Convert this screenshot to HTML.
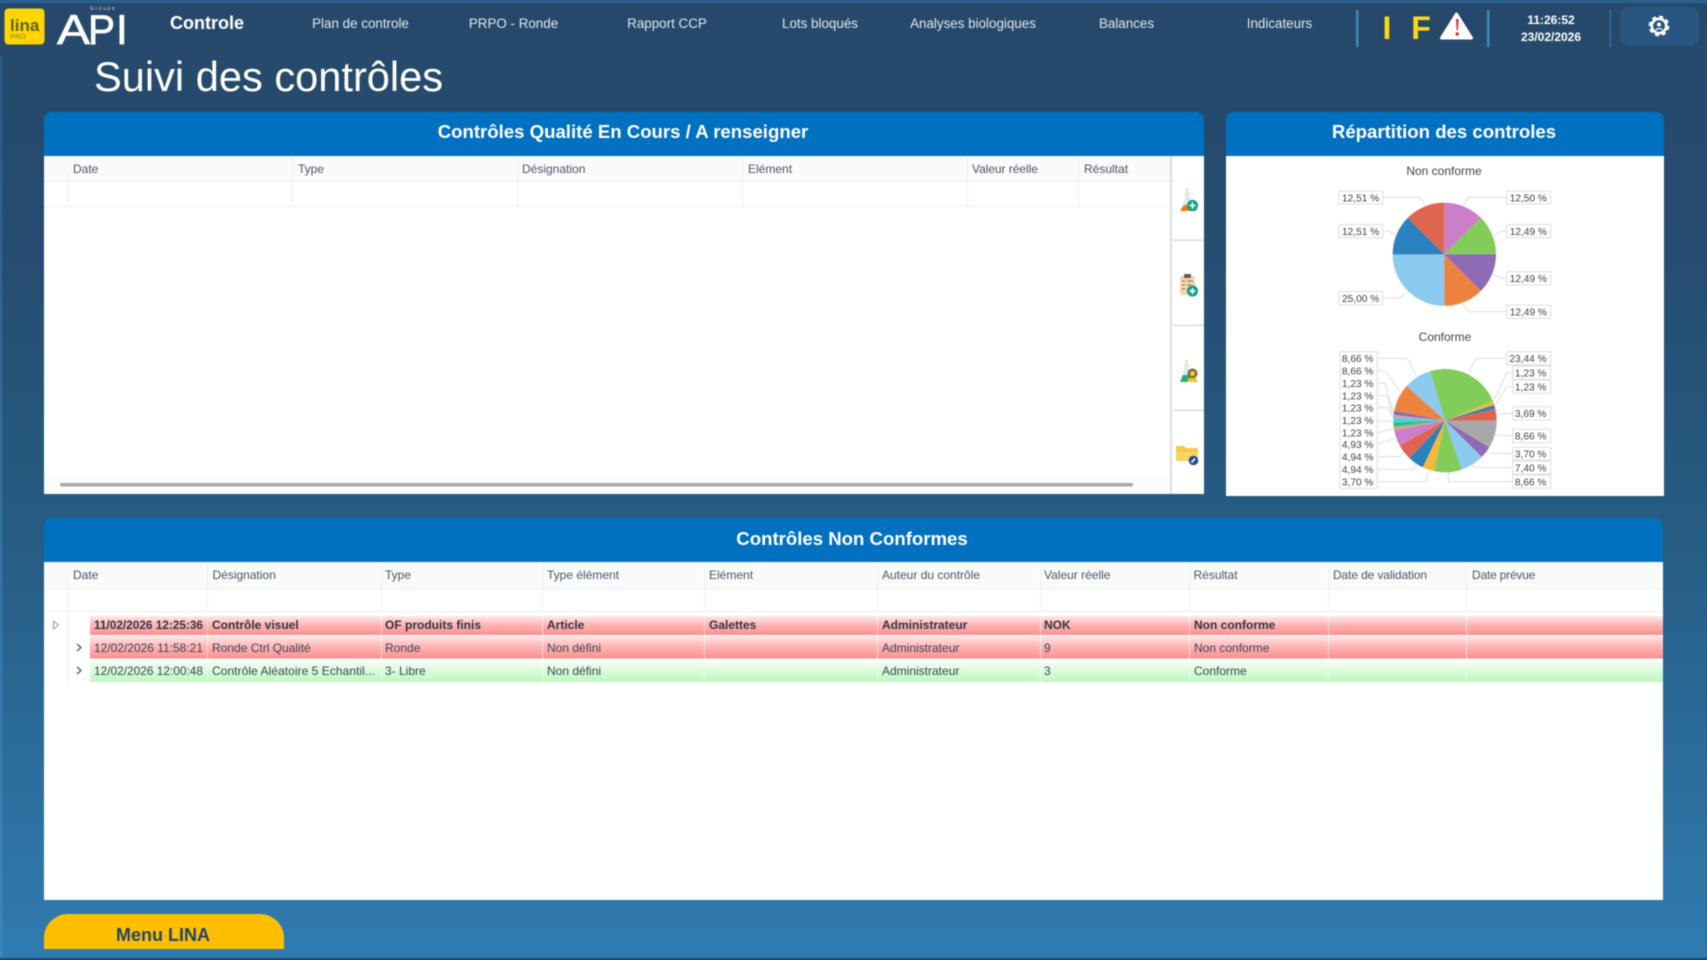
<!DOCTYPE html>
<html lang="fr">
<head>
<meta charset="utf-8">
<title>Suivi des contrôles</title>
<style>
html,body{margin:0;padding:0;width:1707px;height:960px;overflow:hidden;background:#26496b}
svg{display:block;filter:blur(.4px)}
text{font-family:"Liberation Sans",sans-serif}
.nav{font-size:13.4px;fill:#dfe7ee;text-anchor:middle}
.ttl{font-size:18.6px;font-weight:bold;fill:#fff;text-anchor:middle}
.th{font-size:12px;fill:#48566a}
.td{font-size:12px;fill:#3a4658}
.b{font-weight:bold;fill:#2c3646}
.lb{font-size:30.5px;fill:#444;text-anchor:middle}
.bx{fill:#fff;stroke:#ddd;stroke-width:3}
.cn{fill:none;stroke:#ddd;stroke-width:3}
.g{stroke:#eee;stroke-width:1}
.w{stroke:#fff;stroke-opacity:.55;stroke-width:1}
</style>
</head>
<body>
<svg width="1707" height="960" viewBox="0 0 1707 960" xmlns="http://www.w3.org/2000/svg">
<defs>
<linearGradient id="bg" x1="0" y1="0" x2="0" y2="1">
<stop offset="0" stop-color="#26496b"/><stop offset=".25" stop-color="#264c70"/><stop offset=".55" stop-color="#275c83"/><stop offset="1" stop-color="#307cb1"/>
</linearGradient>
<linearGradient id="edge" x1="0" y1="0" x2="0" y2="1">
<stop offset="0" stop-color="#2c5f88"/><stop offset="1" stop-color="#4090cc"/>
</linearGradient>
<linearGradient id="red" x1="0" y1="0" x2="0" y2="1">
<stop offset="0" stop-color="#ffe8e8"/><stop offset=".45" stop-color="#ffb6b6"/><stop offset="1" stop-color="#fb8f8f"/>
</linearGradient>
<linearGradient id="grn" x1="0" y1="0" x2="0" y2="1">
<stop offset="0" stop-color="#fbfffb"/><stop offset="1" stop-color="#bdf8bd"/>
</linearGradient>
</defs>

<!-- background -->
<rect width="1707" height="960" fill="url(#bg)"/>
<rect width="1707" height="3" fill="#2c6192"/>
<rect x="0" y="56" width="2" height="904" fill="url(#edge)"/>
<rect x="0" y="958" width="1707" height="2" fill="#1d4a6d"/>

<!-- logo lina -->
<rect x="4.5" y="8.5" width="40" height="36" rx="4" fill="#ffd400"/>
<text x="10" y="31" font-size="17" font-weight="bold" fill="#5b6622">lina</text>
<text x="10" y="39" font-size="7.5" font-weight="bold" fill="#a0a81e">PRO</text>

<!-- logo API -->
<text x="90" y="10" font-size="5" fill="#cfd8e0" letter-spacing="1.6">Groupe</text>
<g fill="#fff" stroke="#fff" stroke-width=".7" font-size="42">
<text x="57" y="44" textLength="33" lengthAdjust="spacingAndGlyphs">A</text>
<text x="88" y="44" textLength="27" lengthAdjust="spacingAndGlyphs">P</text>
<text x="116" y="44">I</text>
</g>

<!-- nav -->
<text x="207" y="29" font-size="18" font-weight="bold" fill="#fff" text-anchor="middle">Controle</text>
<text class="nav" x="360.5" y="28">Plan de controle</text>
<text class="nav" x="513.5" y="28">PRPO - Ronde</text>
<text class="nav" x="667" y="28">Rapport CCP</text>
<text class="nav" x="820" y="28">Lots bloqués</text>
<text class="nav" x="973" y="28">Analyses biologiques</text>
<text class="nav" x="1126.5" y="28">Balances</text>
<text class="nav" x="1279.5" y="28">Indicateurs</text>

<rect x="1356" y="10" width="2.5" height="37" fill="#3f86b8"/>
<rect x="1487" y="10" width="2.5" height="37" fill="#3f86b8"/>
<rect x="1609.5" y="10" width="1.5" height="37" fill="#346f9c"/>

<text x="1387" y="39" font-size="32" font-weight="bold" fill="#ffd814" text-anchor="middle">I</text>
<text x="1421" y="39" font-size="32" font-weight="bold" fill="#ffd814" text-anchor="middle">F</text>
<path d="M1456.5 14 L1471.5 38 H1441.5 Z" fill="#fff" stroke="#fff" stroke-width="3" stroke-linejoin="round"/>
<path d="M1456 19 h2.6 l-.6 11 h-1.4 Z" fill="#d92b3a"/>
<circle cx="1457.2" cy="34" r="1.7" fill="#d92b3a"/>

<text x="1551" y="24" font-size="12" font-weight="bold" fill="#fff" text-anchor="middle">11:26:52</text>
<text x="1551" y="41" font-size="12" font-weight="bold" fill="#fff" text-anchor="middle">23/02/2026</text>

<rect x="1620" y="7" width="79" height="39" rx="9" fill="#295581"/>
<circle cx="1659" cy="26" r="9.2" fill="none" stroke="#fff" stroke-width="2.3" stroke-dasharray="4 3.2"/>
<circle cx="1659" cy="26" r="7.2" fill="none" stroke="#fff" stroke-width="2.6"/>
<circle cx="1659" cy="24.5" r="2" fill="#fff"/>
<path d="M1655.5 30 q3.5 -3 7 0" fill="none" stroke="#fff" stroke-width="1.3"/>

<!-- title -->
<text x="94" y="91" font-size="41.6" fill="#fff">Suivi des contrôles</text>

<!-- top-left panel -->
<path d="M44 156 V120 a8 8 0 0 1 8 -8 H1196 a8 8 0 0 1 8 8 V156 Z" fill="#0070c0"/>
<text class="ttl" x="623" y="138">Contrôles Qualité En Cours / A renseigner</text>
<rect x="44" y="156" width="1160" height="338" fill="#fff"/>
<rect x="44" y="156" width="1127" height="26" fill="#fafafa"/>
<line class="g" x1="44" y1="181.5" x2="1170" y2="181.5"/>
<line class="g" x1="44" y1="206.5" x2="1170" y2="206.5"/>
<g class="g">
<line x1="67.5" y1="172" x2="67.5" y2="206"/>
<line x1="292.5" y1="156" x2="292.5" y2="206"/>
<line x1="517.5" y1="156" x2="517.5" y2="206"/>
<line x1="742.5" y1="156" x2="742.5" y2="206"/>
<line x1="967.5" y1="156" x2="967.5" y2="206"/>
<line x1="1078.5" y1="156" x2="1078.5" y2="206"/>
</g>
<text class="th" x="73" y="173">Date</text>
<text class="th" x="298" y="173">Type</text>
<text class="th" x="522" y="173">Désignation</text>
<text class="th" x="748" y="173">Elément</text>
<text class="th" x="972" y="173" letter-spacing="-.05">Valeur réelle</text>
<text class="th" x="1084" y="173">Résultat</text>
<rect x="44" y="477" width="1126" height="17" fill="#fcfcfc"/>
<rect x="60" y="483" width="1073" height="3.5" rx="1.7" fill="#a9a9a9"/>

<!-- sidebar -->
<rect x="1170" y="156" width="2" height="338" fill="#dcdcdc"/>
<rect x="1173" y="239.5" width="31" height="1.6" fill="#dedede"/>
<rect x="1173" y="324.5" width="31" height="1.6" fill="#dedede"/>
<rect x="1173" y="409.5" width="31" height="1.6" fill="#dedede"/>

<g transform="translate(0 2)">
<!-- icon: flask + plus -->
<g>
<path d="M1184.5 190 h5.5 v7 l6 12 h-16 l5 -12 Z" fill="#e6e8ee"/>
<path d="M1184 203 h8 l5 6 h-17 Z" fill="#f07a16"/>
<circle cx="1187" cy="188" r="1.2" fill="#f6cf60"/>
<circle cx="1192.5" cy="203.5" r="5.6" fill="#16a085"/>
<path d="M1192.5 200.5 v6 M1189.5 203.5 h6" stroke="#fff" stroke-width="1.6"/>
</g>
<!-- icon: clipboard + plus -->
<g>
<rect x="1180" y="274" width="15" height="19" rx="1" fill="#f6d3b0"/>
<rect x="1184" y="272" width="7" height="4" rx="1" fill="#6b5a48"/>
<path d="M1182 279 h3 M1187 279 h6 M1182 283 h3 M1187 283 h4 M1182 287 h3 M1187 287 h3" stroke="#8a7058" stroke-width="1"/>
<circle cx="1192.5" cy="289" r="5.6" fill="#16a085"/>
<path d="M1192.5 286 v6 M1189.5 289 h6" stroke="#fff" stroke-width="1.6"/>
</g>
<!-- icon: flask + rosette -->
<g>
<path d="M1184 361 h5 v7 l5 11 h-14 l4 -11 Z" fill="#e6e8ee"/>
<path d="M1183 373 h8 l4 7 h-15 Z" fill="#27ae7a"/>
<circle cx="1186.5" cy="359" r="1.2" fill="#f6cf60"/>
<circle cx="1192.5" cy="371.5" r="5" fill="#7b6a2c"/>
<circle cx="1192.5" cy="371.5" r="2.6" fill="#f2c230"/>
<path d="M1189 376 l-2 4 h11 l-2 -4 Z" fill="#f2c230"/>
</g>
<!-- icon: folder + pencil -->
<g>
<path d="M1176 444 h8 l2 2 h10 a2 2 0 0 1 2 2 v11 h-22 Z" fill="#f6c945"/>
<path d="M1176 450 h22 v9 h-22 Z" fill="#f8d463"/>
<circle cx="1193.5" cy="458.5" r="4.8" fill="#1f4f96"/>
<path d="M1191.5 460.5 L1195 456.5" stroke="#fff" stroke-width="1.6"/>
</g>
</g>

<!-- right panel -->
<path d="M1226 156 V120 a8 8 0 0 1 8 -8 H1656 a8 8 0 0 1 8 8 V156 Z" fill="#0070c0"/>
<text class="ttl" x="1444" y="138">Répartition des controles</text>
<rect x="1226" y="156" width="438" height="340" fill="#fff"/>

<text x="1444" y="175" font-size="12" fill="#444" text-anchor="middle">Non conforme</text>
<g transform="translate(1320 160) scale(.33333)">
<g class="cn">
<polyline points="188,112 300,112 316,135"/>
<polyline points="188,213 205,213 228,226"/>
<polyline points="188,414 240,414 262,395"/>
<polyline points="560,112 445,112 430,135"/>
<polyline points="560,213 545,213 520,228"/>
<polyline points="560,355 545,355 520,343"/>
<polyline points="560,455 445,455 430,430"/>
</g>
<g fill="none" stroke-width="155" transform="rotate(-90 373 283)">
<circle cx="373" cy="283" r="77.5" pathLength="100" stroke="#cb7fc9" stroke-dasharray="12.5 100"/>
<circle cx="373" cy="283" r="77.5" pathLength="100" stroke="#82cc5a" stroke-dasharray="12.49 100" stroke-dashoffset="-12.5"/>
<circle cx="373" cy="283" r="77.5" pathLength="100" stroke="#8f6ab5" stroke-dasharray="12.49 100" stroke-dashoffset="-24.99"/>
<circle cx="373" cy="283" r="77.5" pathLength="100" stroke="#ee8340" stroke-dasharray="12.49 100" stroke-dashoffset="-37.48"/>
<circle cx="373" cy="283" r="77.5" pathLength="100" stroke="#8ccaf0" stroke-dasharray="25 100" stroke-dashoffset="-49.97"/>
<circle cx="373" cy="283" r="77.5" pathLength="100" stroke="#2a82bf" stroke-dasharray="12.51 100" stroke-dashoffset="-74.97"/>
<circle cx="373" cy="283" r="77.5" pathLength="100" stroke="#e0654f" stroke-dasharray="12.52 100" stroke-dashoffset="-87.48"/>
</g>
<rect class="bx" x="57" y="93" width="131" height="39"/><text class="lb" x="122" y="124">12,51 %</text>
<rect class="bx" x="57" y="194" width="131" height="39"/><text class="lb" x="122" y="225">12,51 %</text>
<rect class="bx" x="57" y="394" width="131" height="41"/><text class="lb" x="122" y="426">25,00 %</text>
<rect class="bx" x="560" y="93" width="132" height="39"/><text class="lb" x="625" y="124">12,50 %</text>
<rect class="bx" x="560" y="194" width="132" height="39"/><text class="lb" x="625" y="225">12,49 %</text>
<rect class="bx" x="560" y="335" width="132" height="40"/><text class="lb" x="625" y="366">12,49 %</text>
<rect class="bx" x="560" y="435" width="132" height="40"/><text class="lb" x="625" y="466">12,49 %</text>
</g>

<text x="1445" y="341" font-size="12" fill="#444" text-anchor="middle">Conforme</text>
<g transform="translate(1320 325) scale(.33333)">
<g class="cn">
<polyline points="172,100 262,100 288,150"/>
<polyline points="172,137 195,137 240,200"/>
<polyline points="172,175 195,175 222,265"/>
<polyline points="172,212 200,212 220,272"/>
<polyline points="172,248 205,248 220,280"/>
<polyline points="172,286 220,290"/>
<polyline points="172,323 222,310"/>
<polyline points="172,358 225,340"/>
<polyline points="172,395 240,395 250,380"/>
<polyline points="172,433 280,433 290,410"/>
<polyline points="172,470 318,470 325,440"/>
<polyline points="558,100 470,100 445,140"/>
<polyline points="578,143 560,143 520,230"/>
<polyline points="578,185 560,185 525,242"/>
<polyline points="578,265 532,268"/>
<polyline points="578,333 525,330"/>
<polyline points="578,385 505,385 497,375"/>
<polyline points="578,428 465,428 455,420"/>
<polyline points="578,470 385,470 385,440"/>
</g>
<g fill="none" stroke-width="155">
<circle cx="375" cy="287" r="77.5" pathLength="100" stroke="#a8a8a8" stroke-dasharray="8.66 100"/>
<circle cx="375" cy="287" r="77.5" pathLength="100" stroke="#8f6ab5" stroke-dasharray="3.7 100" stroke-dashoffset="-8.66"/>
<circle cx="375" cy="287" r="77.5" pathLength="100" stroke="#8ccaf0" stroke-dasharray="7.4 100" stroke-dashoffset="-12.36"/>
<circle cx="375" cy="287" r="77.5" pathLength="100" stroke="#82cc5a" stroke-dasharray="8.66 100" stroke-dashoffset="-19.76"/>
<circle cx="375" cy="287" r="77.5" pathLength="100" stroke="#f2b93a" stroke-dasharray="3.7 100" stroke-dashoffset="-28.42"/>
<circle cx="375" cy="287" r="77.5" pathLength="100" stroke="#2a82bf" stroke-dasharray="4.94 100" stroke-dashoffset="-32.12"/>
<circle cx="375" cy="287" r="77.5" pathLength="100" stroke="#e0654f" stroke-dasharray="4.94 100" stroke-dashoffset="-37.06"/>
<circle cx="375" cy="287" r="77.5" pathLength="100" stroke="#cb7fc9" stroke-dasharray="4.93 100" stroke-dashoffset="-42"/>
<circle cx="375" cy="287" r="77.5" pathLength="100" stroke="#c9a878" stroke-dasharray="1.23 100" stroke-dashoffset="-46.93"/>
<circle cx="375" cy="287" r="77.5" pathLength="100" stroke="#2fb8a0" stroke-dasharray="1.23 100" stroke-dashoffset="-48.16"/>
<circle cx="375" cy="287" r="77.5" pathLength="100" stroke="#38d8c8" stroke-dasharray="1.23 100" stroke-dashoffset="-49.39"/>
<circle cx="375" cy="287" r="77.5" pathLength="100" stroke="#b8a8c8" stroke-dasharray="1.23 100" stroke-dashoffset="-50.62"/>
<circle cx="375" cy="287" r="77.5" pathLength="100" stroke="#8f6ab5" stroke-dasharray="1.23 100" stroke-dashoffset="-51.85"/>
<circle cx="375" cy="287" r="77.5" pathLength="100" stroke="#ee8340" stroke-dasharray="8.66 100" stroke-dashoffset="-53.08"/>
<circle cx="375" cy="287" r="77.5" pathLength="100" stroke="#8ccaf0" stroke-dasharray="8.66 100" stroke-dashoffset="-61.74"/>
<circle cx="375" cy="287" r="77.5" pathLength="100" stroke="#82cc5a" stroke-dasharray="23.44 100" stroke-dashoffset="-70.4"/>
<circle cx="375" cy="287" r="77.5" pathLength="100" stroke="#f2b93a" stroke-dasharray="1.23 100" stroke-dashoffset="-93.84"/>
<circle cx="375" cy="287" r="77.5" pathLength="100" stroke="#2a82bf" stroke-dasharray="1.23 100" stroke-dashoffset="-95.07"/>
<circle cx="375" cy="287" r="77.5" pathLength="100" stroke="#e0654f" stroke-dasharray="3.7 100" stroke-dashoffset="-96.3"/>
</g>
<g>
<rect class="bx" x="60" y="80" width="112" height="410"/>
<text class="lb" x="113" y="111">8,66 %</text>
<text class="lb" x="113" y="148">8,66 %</text>
<text class="lb" x="113" y="186">1,23 %</text>
<text class="lb" x="113" y="223">1,23 %</text>
<text class="lb" x="113" y="259">1,23 %</text>
<text class="lb" x="113" y="297">1,23 %</text>
<text class="lb" x="113" y="334">1,23 %</text>
<text class="lb" x="113" y="369">4,93 %</text>
<text class="lb" x="113" y="406">4,94 %</text>
<text class="lb" x="113" y="444">4,94 %</text>
<text class="lb" x="113" y="481">3,70 %</text>
</g>
<rect class="bx" x="560" y="80" width="132" height="40"/><text class="lb" x="624" y="111">23,44 %</text>
<rect class="bx" x="578" y="123" width="114" height="40"/><text class="lb" x="632" y="154">1,23 %</text>
<rect class="bx" x="578" y="165" width="114" height="40"/><text class="lb" x="632" y="196">1,23 %</text>
<rect class="bx" x="578" y="245" width="114" height="40"/><text class="lb" x="632" y="276">3,69 %</text>
<rect class="bx" x="578" y="313" width="114" height="40"/><text class="lb" x="632" y="344">8,66 %</text>
<rect class="bx" x="578" y="367" width="114" height="38"/><text class="lb" x="632" y="397">3,70 %</text>
<rect class="bx" x="578" y="409" width="114" height="38"/><text class="lb" x="632" y="439">7,40 %</text>
<rect class="bx" x="578" y="451" width="114" height="38"/><text class="lb" x="632" y="481">8,66 %</text>
</g>

<!-- bottom panel -->
<path d="M44 562 V526 a8 8 0 0 1 8 -8 H1655 a8 8 0 0 1 8 8 V562 Z" fill="#0070c0"/>
<text class="ttl" x="852" y="545">Contrôles Non Conformes</text>
<rect x="44" y="562" width="1619" height="338" fill="#fff"/>
<rect x="44" y="563" width="1619" height="26" fill="#fafafa"/>
<line class="g" x1="44" y1="588.5" x2="1663" y2="588.5"/>
<line class="g" x1="44" y1="611.5" x2="1663" y2="611.5"/>
<g class="g">
<line x1="67.5" y1="575" x2="67.5" y2="684"/>
<line x1="207.5" y1="563" x2="207.5" y2="612"/>
<line x1="381.5" y1="563" x2="381.5" y2="612"/>
<line x1="542.5" y1="563" x2="542.5" y2="612"/>
<line x1="704.5" y1="563" x2="704.5" y2="612"/>
<line x1="877.5" y1="563" x2="877.5" y2="612"/>
<line x1="1040.5" y1="563" x2="1040.5" y2="612"/>
<line x1="1189.5" y1="563" x2="1189.5" y2="612"/>
<line x1="1328.5" y1="563" x2="1328.5" y2="612"/>
<line x1="1466.5" y1="563" x2="1466.5" y2="612"/>
</g>
<text class="th" x="73" y="579">Date</text>
<text class="th" x="212.5" y="579">Désignation</text>
<text class="th" x="385" y="579">Type</text>
<text class="th" x="547" y="579">Type élément</text>
<text class="th" x="709" y="579">Elément</text>
<text class="th" x="882" y="579">Auteur du contrôle</text>
<text class="th" x="1044" y="579">Valeur réelle</text>
<text class="th" x="1193.5" y="579">Résultat</text>
<text class="th" x="1333" y="579" letter-spacing="-.12">Date de validation</text>
<text class="th" x="1472" y="579" letter-spacing="-.2">Date prévue</text>

<rect x="90" y="616" width="1573" height="19" fill="url(#red)"/>
<rect x="90" y="636" width="1573" height="22.5" fill="url(#red)"/>
<rect x="90" y="659" width="1573" height="23" fill="url(#grn)"/>
<g class="w">
<line x1="207.5" y1="616" x2="207.5" y2="682"/>
<line x1="381.5" y1="616" x2="381.5" y2="682"/>
<line x1="542.5" y1="616" x2="542.5" y2="682"/>
<line x1="704.5" y1="616" x2="704.5" y2="682"/>
<line x1="877.5" y1="616" x2="877.5" y2="682"/>
<line x1="1040.5" y1="616" x2="1040.5" y2="682"/>
<line x1="1189.5" y1="616" x2="1189.5" y2="682"/>
<line x1="1328.5" y1="616" x2="1328.5" y2="682"/>
<line x1="1466.5" y1="616" x2="1466.5" y2="682"/>
</g>

<path d="M53.5 621 v8 l5 -4 Z" fill="#fff" stroke="#9a9a9a"/>
<path d="M77 644 l4 3.5 l-4 3.5 M77 667 l4 3.5 l-4 3.5" fill="none" stroke="#555" stroke-width="1.3"/>

<g class="td b">
<text x="94" y="629" textLength="109" lengthAdjust="spacingAndGlyphs">11/02/2026 12:25:36</text>
<text x="212" y="629">Contrôle visuel</text>
<text x="385" y="629">OF produits finis</text>
<text x="547" y="629">Article</text>
<text x="709" y="629">Galettes</text>
<text x="882" y="629">Administrateur</text>
<text x="1044" y="629">NOK</text>
<text x="1194" y="629">Non conforme</text>
</g>
<g class="td">
<text x="94" y="652" textLength="109" lengthAdjust="spacingAndGlyphs">12/02/2026 11:58:21</text>
<text x="212" y="652">Ronde Ctrl Qualité</text>
<text x="385" y="652">Ronde</text>
<text x="547" y="652">Non défini</text>
<text x="882" y="652">Administrateur</text>
<text x="1044" y="652">9</text>
<text x="1194" y="652">Non conforme</text>
<text x="94" y="675" textLength="109" lengthAdjust="spacingAndGlyphs">12/02/2026 12:00:48</text>
<text x="212" y="675" textLength="163" lengthAdjust="spacing">Contrôle Aléatoire 5 Echantil...</text>
<text x="385" y="675">3- Libre</text>
<text x="547" y="675">Non défini</text>
<text x="882" y="675">Administrateur</text>
<text x="1044" y="675">3</text>
<text x="1194" y="675">Conforme</text>
</g>

<!-- menu button -->
<path d="M44 949 V938 a24 24 0 0 1 24 -24 H260 a24 24 0 0 1 24 24 V949 Z" fill="#ffbf00"/>
<text x="163" y="941" font-size="18" font-weight="bold" fill="#23456a" text-anchor="middle">Menu LINA</text>
</svg>
</body>
</html>
